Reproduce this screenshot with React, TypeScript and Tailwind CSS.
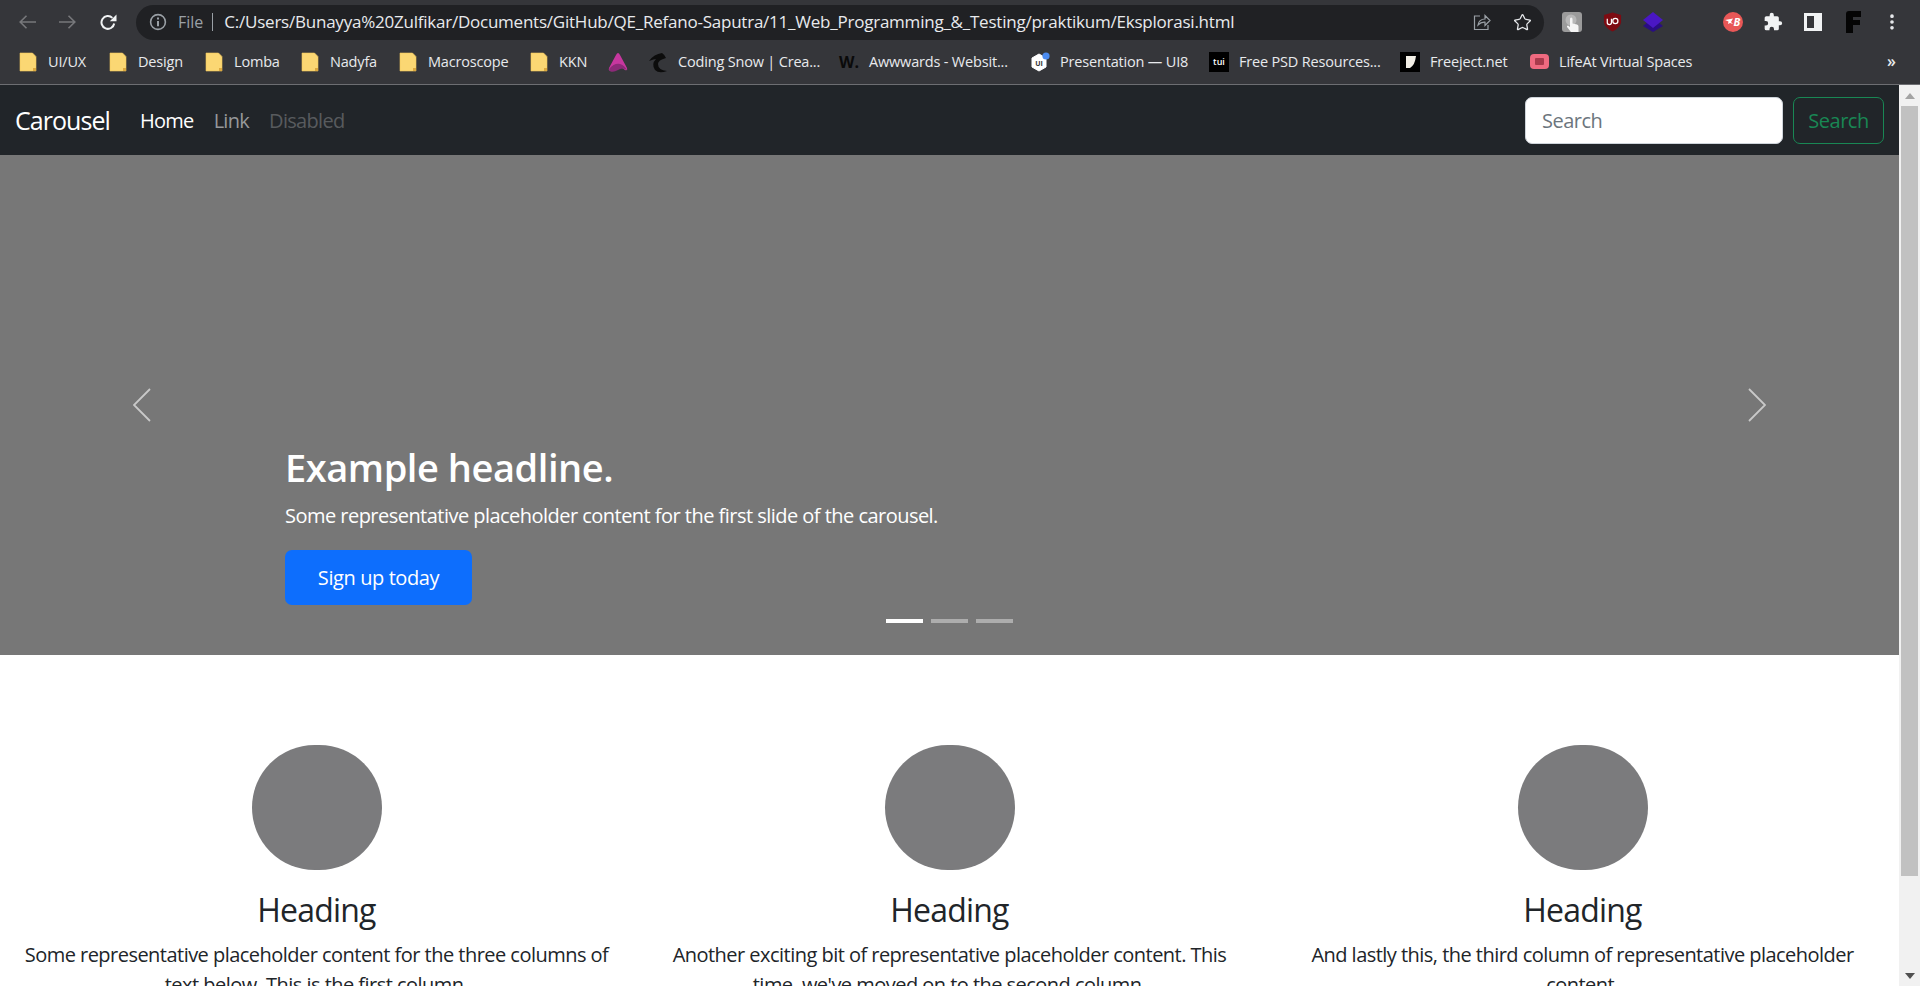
import { Star, MoreVertical } from "lucide-react";
import type { ReactNode } from "react";

const Folder = () => (
  <svg viewBox="0 0 20 24" className="w-5 h-6">
    <path d="M2 3h12.5L18 6.5V21H2z" fill="#fbd773" stroke="#f0c65a" strokeWidth="0.6" />
    <path d="M15 21v-3h3v3z" fill="#dca93f" />
  </svg>
);

const PinkA = () => (
  <svg viewBox="0 0 20 24" className="w-5 h-6">
    <path d="M10 3Q11 3 12 5L19 18Q20 21 17 20Q13 16 9 19Q5 22 2 21Q0 20 1 18L8 5Q9 3 10 3Z" fill="#c7379f" />
    <path d="M1 19Q6 13 12 14Q16 15 19 20Q14 17 10 20Q5 23 2 21Z" fill="#8c2a78" />
  </svg>
);

const SnowDragon = () => (
  <svg viewBox="0 0 20 24" className="w-5 h-6">
    <path d="M14 3Q6 4 1 11Q6 9 8 9Q3 14 7 20Q11 24 19 21Q10 20 10 14Q10 10 18 8Q17 5 14 3Z" fill="#0c0c0c" />
  </svg>
);

const UI8 = () => (
  <svg viewBox="0 0 20 24" className="w-5 h-6">
    <path d="M9 4l7 4v9l-7 4-7-4V8z" fill="#fff" stroke="#fff" strokeLinejoin="round" />
    <text x="9" y="15.5" textAnchor="middle" fontSize="7" fontWeight="700" fill="#333">UI</text>
    <circle cx="16" cy="6" r="3.6" fill="#4b8bf0" />
  </svg>
);

const Freeject = () => (
  <div className="w-5 h-5 bg-black flex items-center justify-center">
    <svg viewBox="0 0 20 20" className="w-5 h-5">
      <path d="M6 4h10q-1 9-6 12H6z" fill="#f2efe6" />
    </svg>
  </div>
);

const LifeAt = () => (
  <div className="w-[19px] h-[15px] rounded-[4px] bg-[#ef6a80] flex items-center justify-center">
    <div className="w-[9px] h-[7px] rounded-[1px] bg-[#a83a4c]" />
  </div>
);

const bookmarks: { label: string; icon: ReactNode; w: string }[] = [
  { label: "UI/UX", icon: <Folder />, w: "w-[40px]" },
  { label: "Design", icon: <Folder />, w: "w-[46px]" },
  { label: "Lomba", icon: <Folder />, w: "w-[46px]" },
  { label: "Nadyfa", icon: <Folder />, w: "w-[48px]" },
  { label: "Macroscope", icon: <Folder />, w: "w-[81px]" },
  { label: "KKN", icon: <Folder />, w: "w-[29px]" },
  { label: "", icon: <PinkA />, w: "w-0" },
  { label: "Coding Snow | Crea...", icon: <SnowDragon />, w: "w-[141px]" },
  {
    label: "Awwwards - Websit...",
    icon: <span className="text-[16px] font-bold text-[#0a0a0a]">W.</span>,
    w: "w-[141px]",
  },
  { label: "Presentation — UI8", icon: <UI8 />, w: "w-[129px]" },
  {
    label: "Free PSD Resources...",
    icon: <div className="w-5 h-5 bg-black text-white text-[9px] font-semibold flex items-center justify-center">tui</div>,
    w: "w-[141px]",
  },
  { label: "Freeject.net", icon: <Freeject />, w: "w-[79px]" },
  { label: "LifeAt Virtual Spaces", icon: <LifeAt />, w: "w-[134px]" },
];

function BrowserBar() {
  return (
    <div className="bg-[#35363a] h-[85px] border-b border-[#6d6e72] flex flex-col">
      <div className="h-[43px] flex items-center pt-[1px]">
        <div className="flex items-center gap-[23px] pl-[19px] w-[136px] shrink-0">
          <svg viewBox="0 0 17 14" className="w-[17px] h-[14px]" fill="none" stroke="#77787b" strokeWidth="1.6">
            <path d="M17 7H1.2M7.5 .8L1.2 7l6.3 6.2" />
          </svg>
          <svg viewBox="0 0 17 14" className="w-[17px] h-[14px]" fill="none" stroke="#77787b" strokeWidth="1.6">
            <path d="M0 7h15.8M9.5 .8L15.8 7l-6.3 6.2" />
          </svg>
          <svg viewBox="0 0 18 16" className="w-[18px] h-[16px]" fill="none" stroke="#f1f3f4" strokeWidth="2">
            <path d="M15.2 9.5a6.4 6.4 0 1 1-1.8-5.6" />
            <path d="M17.5 .5v6.7h-6.7z" fill="#f1f3f4" stroke="none" />
          </svg>
        </div>
        <div className="w-[1408px] h-[35px] rounded-full bg-[#202124] flex items-center pl-[12px] pr-[12px]">
          <svg viewBox="0 0 18 18" className="w-[18px] h-[18px] ml-[1px]" fill="none" stroke="#9aa0a6" strokeWidth="1.6">
            <circle cx="9" cy="9" r="7.4" />
            <path d="M9 8v5.2M9 4.6v1.8" strokeWidth="2" />
          </svg>
          <span className="ml-[11px] text-[16px] text-[#9aa0a6]">File</span>
          <div className="ml-[9px] w-px h-[18px] bg-[#9aa0a6]" />
          <span className="ml-[11px] text-[17px] text-[#e8eaed] whitespace-nowrap tracking-[-0.23px]">
            C:/Users/Bunayya%20Zulfikar/Documents/GitHub/QE_Refano-Saputra/11_Web_Programming_&amp;_Testing/praktikum/Eksplorasi.html
          </span>
          <div className="ml-auto flex items-center gap-[21px]">
            <svg viewBox="0 0 20 20" className="w-[20px] h-[20px]" fill="none" stroke="#9aa0a6" strokeWidth="1.2">
              <path d="M8 4H2.5v13.5H16V13" />
              <path d="M6 13q1-6 7-6V3.5l5 5-5 5V10.2q-4-.4-7 2.8z" />
            </svg>
            <Star className="w-[19px] h-[19px] text-[#e8eaed]" strokeWidth={1.6} />
          </div>
        </div>
        <div className="flex-1 flex items-center pl-[18px]">
          <svg viewBox="0 0 20 20" className="w-[20px] h-[20px]">
            <rect width="20" height="20" rx="3" fill="#9b9b9b" />
            <circle cx="9" cy="8" r="5.5" fill="#b8b8b8" />
            <path d="M8 7q0-1.5 1.2-1.5T10.5 7v4.5l4.5 1q1.5.5 1.5 2V20H9l-4-5q-.5-1.5 1-1.5l2 1.5z" fill="#f5f5f5" />
          </svg>
          <svg viewBox="0 0 20 20" className="w-[19px] h-[20px] ml-[21px]">
            <path d="M10 0l9 2.5v8Q18 16 10 20Q2 16 1 10.5v-8z" fill="#7d0b12" />
            <path d="M4.5 6.5v4a2.2 2.2 0 0 0 4.4 0v-4" fill="none" stroke="#fff" strokeWidth="1.3" />
            <circle cx="13" cy="9" r="2.7" fill="none" stroke="#fff" strokeWidth="1.3" />
          </svg>
          <svg viewBox="0 0 20 20" className="w-[20px] h-[20px] ml-[21px]">
            <path d="M10 6l10 8-10 6L0 14z" fill="#2a0d83" />
            <path d="M10 0l10 8-10 8L0 8z" fill="#4a17c4" />
          </svg>
          <svg viewBox="0 0 20 20" className="w-[20px] h-[20px] ml-[60px]">
            <circle cx="10" cy="10" r="10" fill="#e85757" />
            <path d="M2 8l8-1.5-2 3.5 2 2-3-1-2 1 .5-2.5z" fill="#fff" />
            <text x="14" y="14" textAnchor="middle" fontSize="11" fontWeight="700" fontStyle="italic" fill="#fff">B</text>
          </svg>
          <svg viewBox="0 0 24 24" className="w-[20px] h-[20px] ml-[20px]" fill="#f1f3f4">
            <path d="M20.5 11H19V7a2 2 0 0 0-2-2h-4V3.5a2.5 2.5 0 0 0-5 0V5H4a2 2 0 0 0-2 2v3.8h1.5a2.7 2.7 0 0 1 0 5.4H2V20a2 2 0 0 0 2 2h3.8v-1.5a2.7 2.7 0 0 1 5.4 0V22H17a2 2 0 0 0 2-2v-4h1.5a2.5 2.5 0 0 0 0-5z" />
          </svg>
          <div className="w-[18px] h-[18px] ml-[21px] border-[3px] border-[#f1f3f4] border-r-[8px]" />
          <svg viewBox="0 0 16 22" className="w-[16px] h-[22px] ml-[24px]">
            <path d="M0 3q0-3 3-3h12v6H7v3h7v5H7v8H0z" fill="#050505" />
          </svg>
          <MoreVertical className="w-[20px] h-[20px] ml-[20px] text-[#e8eaed]" strokeWidth={2.4} />
        </div>
      </div>
      <div className="flex-1 flex items-center pl-[18px] pb-[4px] relative">
        {bookmarks.map((b, i) => (
          <div key={i} className="flex items-center gap-[10px] mr-[20px]">
            <div className="w-5 h-6 flex items-center justify-center">{b.icon}</div>
            {b.label && (
              <span className={`${b.w} text-[14.5px] text-[#e8eaed] whitespace-nowrap tracking-[-0.18px]`}>{b.label}</span>
            )}
          </div>
        ))}
        <span className="absolute left-[1887px] top-[6px] text-[16px] font-semibold text-[#e8eaed]">»</span>
      </div>
    </div>
  );
}

function Navbar() {
  return (
    <nav className="h-[70px] bg-[#212529] flex items-center pl-[15px] pr-[15px]">
      <a className="pt-[2px] text-[25px] text-white tracking-[-0.95px]">Carousel</a>
      <div className="flex items-center pt-[2px] ml-[30px] gap-[20px] text-[20px] tracking-[-0.7px]">
        <a className="text-white">Home</a>
        <a className="text-[#96989a]">Link</a>
        <a className="text-[#585b5e]">Disabled</a>
      </div>
      <div className="ml-auto flex items-center gap-[10px]">
        <div className="w-[258px] h-[47px] bg-white rounded-[7px] border border-[#ced4da] flex items-center pl-[16px] pt-[2px] text-[20px] text-[#6c757d] tracking-[-0.5px]">
          Search
        </div>
        <button className="w-[91px] h-[47px] pt-[2px] rounded-[7px] border border-[#198754] text-[20px] text-[#198754] tracking-[-0.5px]">
          Search
        </button>
      </div>
    </nav>
  );
}

function Carousel() {
  return (
    <section className="relative h-[500px] bg-[#777777] flex flex-col justify-end pl-[285px] pb-[50px]">
      <h1 className="text-[38px] leading-[52px] font-semibold text-white tracking-[-0.45px]">Example headline.</h1>
      <p className="text-[20px] leading-[30px] mt-[8px] text-white tracking-[-0.53px]">
        Some representative placeholder content for the first slide of the carousel.
      </p>
      <button className="mt-[19px] w-[187px] h-[55px] rounded-[7px] bg-[#0d6efd] text-[20px] text-white tracking-[-0.4px]">
        Sign up today
      </button>
      <svg viewBox="0 0 18 34" className="absolute left-[133px] top-[233px] w-[18px] h-[34px]" fill="none" stroke="#c9c9c9" strokeWidth="1.8">
        <path d="M17 1L1 17l16 16" />
      </svg>
      <svg viewBox="0 0 18 34" className="absolute left-[1748px] top-[233px] w-[18px] h-[34px]" fill="none" stroke="#c9c9c9" strokeWidth="1.8">
        <path d="M1 1l16 16L1 33" />
      </svg>
      <div className="absolute bottom-[32px] left-[886px] flex gap-[8px]">
        <div className="w-[37px] h-[4px] bg-white" />
        <div className="w-[37px] h-[4px] bg-[#adadad]" />
        <div className="w-[37px] h-[4px] bg-[#adadad]" />
      </div>
    </section>
  );
}

const columns = [
  "Some representative placeholder content for the three columns of text below. This is the first column.",
  "Another exciting bit of representative placeholder content. This time, we've moved on to the second column.",
  "And lastly this, the third column of representative placeholder content.",
];

function Features() {
  return (
    <section className="grid grid-cols-3 pt-[90px] bg-white">
      {columns.map((text, i) => (
        <div key={i} className="flex flex-col items-center px-[18px] text-center">
          <div className="w-[130px] h-[125px] rounded-full bg-[#7b7b7d]" />
          <h2 className="mt-[16px] text-[32px] leading-[48px] font-medium text-[#212529] tracking-[-0.8px]">Heading</h2>
          <p className="mt-[6px] text-[20px] leading-[30px] text-[#212529] tracking-[-0.53px]">{text}</p>
        </div>
      ))}
    </section>
  );
}

export default function App() {
  return (
    <div className="h-[986px] w-[1920px] overflow-hidden flex flex-col font-['Open_Sans',sans-serif]">
      <BrowserBar />
      <div className="flex-1 flex min-h-0">
        <main className="flex-1 min-w-0 bg-white">
          <Navbar />
          <Carousel />
          <Features />
        </main>
        <div className="w-[21px] shrink-0 bg-[#f1f1f1] flex flex-col items-center">
          <div className="h-[21px] flex items-center justify-center">
            <div className="w-0 h-0 border-x-[5px] border-x-transparent border-b-[6px] border-b-[#a3a3a3]" />
          </div>
          <div className="w-[17px] h-[770px] bg-[#c1c1c1]" />
          <div className="mt-auto h-[21px] flex items-center justify-center">
            <div className="w-0 h-0 border-x-[5px] border-x-transparent border-t-[6px] border-t-[#505050]" />
          </div>
        </div>
      </div>
    </div>
  );
}
